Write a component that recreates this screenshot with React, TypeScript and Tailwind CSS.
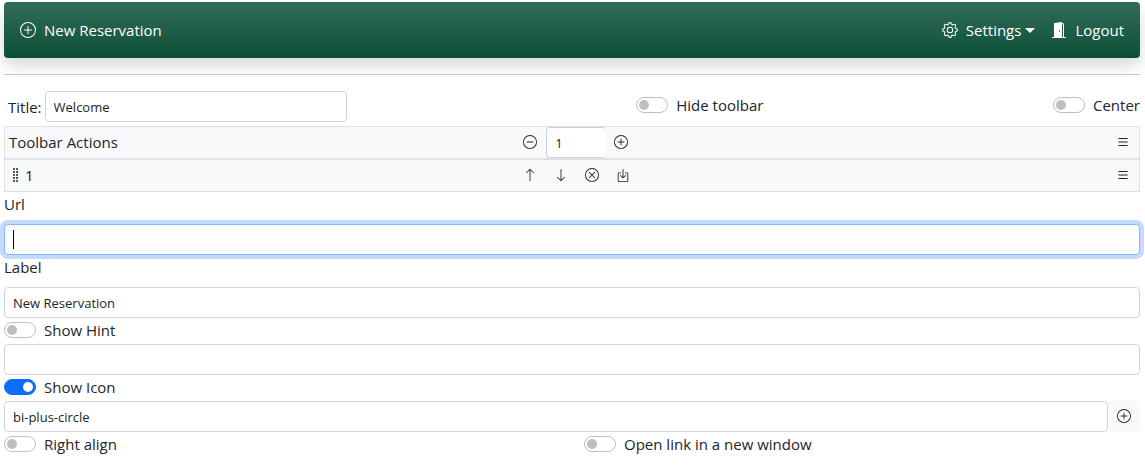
import React, { useId, useState } from "react";
import {
  BsArrowDown,
  BsArrowUp,
  BsBoxArrowInDown,
  BsDashCircle,
  BsDoorOpenFill,
  BsGear,
  BsList,
  BsPlusCircle,
  BsXCircle,
} from "react-icons/bs";

const fieldClass =
  "h-[31px] rounded-[4px] border border-[#ced4da] bg-white px-2 text-[13px] text-[#212529] outline-none focus:border-[#86b7fe] focus:ring-4 focus:ring-[#0d6efd]/25";

function Switch({ label, initial = false }: { label: string; initial?: boolean }) {
  const id = useId();
  const [on, setOn] = useState(initial);
  return (
    <div className="flex h-6 items-center gap-2">
      <input
        id={id}
        type="checkbox"
        role="switch"
        checked={on}
        onChange={(e) => setOn(e.target.checked)}
        className="h-4 w-8 shrink-0 appearance-none rounded-full border border-[#bfbfbf] bg-white p-[2px] before:block before:size-[10px] before:rounded-full before:bg-[#bfbfbf] checked:border-[#0d6efd] checked:bg-[#0d6efd] checked:before:translate-x-4 checked:before:bg-white"
      />
      <label htmlFor={id}>{label}</label>
    </div>
  );
}

function IconButton({ label, children }: { label: string; children: React.ReactNode }) {
  return (
    <button
      type="button"
      aria-label={label}
      className="flex h-[31px] w-[31px] shrink-0 items-start rounded-[4px] bg-[#f8f9fa] pt-2 pl-2 text-sm"
    >
      {children}
    </button>
  );
}

function Grip() {
  return (
    <svg width="6" height="14" viewBox="0 0 6 14" fill="#55585b" aria-hidden="true">
      {[0, 3, 6, 9, 12].map((y) => (
        <g key={y}>
          <rect x="0" y={y} width="2" height="2" />
          <rect x="3" y={y} width="2" height="2" />
        </g>
      ))}
    </svg>
  );
}

function PanelRow({ title, children }: { title: React.ReactNode; children: React.ReactNode }) {
  return (
    <div className="flex items-start border border-[#dee2e6] bg-[#f8f9fa]">
      <div className="flex h-[30px] w-[45%] items-center pl-1">{title}</div>
      <div className="flex flex-1">{children}</div>
      <IconButton label="Menu">
        <BsList />
      </IconButton>
    </div>
  );
}

export default function App() {
  return (
    <div className="bg-white pt-[2px] pr-[5px] pl-1 font-['Open_Sans','Noto_Sans',sans-serif] text-[15px] leading-6 text-[#212529]">
      <nav className="flex h-14 items-center justify-between rounded-[4px] bg-[#0b4f38] bg-linear-to-b from-[#306d59] to-[#0b4f38] px-4 text-white shadow-[0_8px_16px_rgba(0,0,0,0.15)]">
        <a href="#new" className="flex items-center gap-2">
          <BsPlusCircle className="size-4" />
          New Reservation
        </a>
        <div className="flex items-center gap-4">
          <button type="button" className="flex items-center gap-2">
            <BsGear className="size-4" />
            <span className="flex items-center gap-1">
              Settings
              <span className="border-x-[5px] border-t-[5px] border-x-transparent border-t-white" />
            </span>
          </button>
          <a href="#logout" className="flex items-center gap-2">
            <BsDoorOpenFill className="size-4" />
            Logout
          </a>
        </div>
      </nav>
      <hr className="my-4 border-[#c7c8c9]" />

      <form>
        <div className="mb-1 flex items-start justify-between">
          <div className="flex items-center gap-[3px] pl-1">
            <label htmlFor="title">Title:</label>
            <input id="title" defaultValue="Welcome" className={`${fieldClass} w-[302px]`} />
          </div>
          <div className="pt-[2px]">
            <Switch label="Hide toolbar" />
          </div>
          <div className="pt-[2px]">
            <Switch label="Center" />
          </div>
        </div>

        <PanelRow title="Toolbar Actions">
          <IconButton label="Remove action">
            <BsDashCircle />
          </IconButton>
          <input
            aria-label="Number of actions"
            defaultValue="1"
            className={`${fieldClass} w-[60px] border-r-0`}
          />
          <IconButton label="Add action">
            <BsPlusCircle />
          </IconButton>
        </PanelRow>
        <PanelRow
          title={
            <span className="flex items-center gap-[6px] pl-1">
              <Grip />1
            </span>
          }
        >
          <IconButton label="Move up">
            <BsArrowUp />
          </IconButton>
          <IconButton label="Move down">
            <BsArrowDown />
          </IconButton>
          <IconButton label="Delete">
            <BsXCircle />
          </IconButton>
          <IconButton label="Insert">
            <BsBoxArrowInDown />
          </IconButton>
        </PanelRow>

        <label htmlFor="url" className="mb-2 block">
          Url
        </label>
        <div className="relative">
          <input
            id="url"
            autoFocus
            placeholder=" "
            className={`${fieldClass} peer block w-full placeholder-shown:caret-transparent`}
          />
          <span className="pointer-events-none absolute inset-y-[6px] left-[9px] hidden w-px bg-black peer-focus:peer-placeholder-shown:block" />
        </div>
        <label htmlFor="label" className="mb-2 block">
          Label
        </label>
        <input id="label" defaultValue="New Reservation" className={`${fieldClass} block w-full`} />
        <div className="mb-[2px]">
          <Switch label="Show Hint" />
        </div>
        <input aria-label="Hint" className={`${fieldClass} block w-full`} />
        <div className="mb-[2px]">
          <Switch label="Show Icon" initial />
        </div>
        <div className="flex gap-px">
          <input aria-label="Icon" defaultValue="bi-plus-circle" className={`${fieldClass} min-w-0 flex-1`} />
          <IconButton label="Choose icon">
            <BsPlusCircle />
          </IconButton>
        </div>
        <div className="grid grid-cols-2 gap-6">
          <Switch label="Right align" />
          <Switch label="Open link in a new window" />
        </div>
      </form>
    </div>
  );
}
